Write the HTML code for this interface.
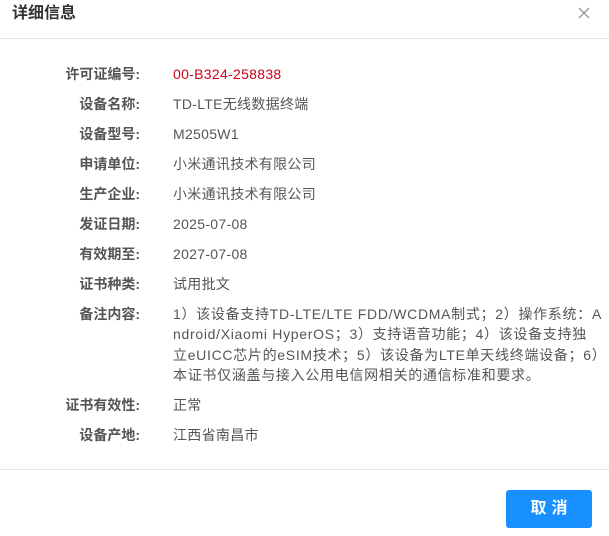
<!DOCTYPE html>
<html><head><meta charset="utf-8"><style>
html,body{margin:0;padding:0;background:#fff;width:609px;height:536px;overflow:hidden;font-family:"Liberation Sans","Noto Sans CJK SC",sans-serif;}
.title{position:absolute;left:12px;top:2px;font-size:16px;font-weight:bold;color:#333;line-height:24px;}
.x{position:absolute;left:578px;top:7px;width:12px;height:12px;}
.hr{position:absolute;left:0;width:609px;height:1px;background:#e8e8e8;}
.lab{position:absolute;right:469px;font-size:14px;font-weight:bold;color:#555;line-height:20px;white-space:nowrap;}
.val{position:absolute;left:173px;font-size:14px;color:#555;line-height:20.3px;white-space:nowrap;letter-spacing:0.3px;}
.btn{position:absolute;left:506px;top:490px;width:86px;height:38px;background:#1890ff;border-radius:3px;color:#fff;font-size:16px;font-weight:bold;text-align:center;line-height:38px;letter-spacing:5px;text-indent:5px;}
</style></head><body>
<div class="title">详细信息</div>
<svg class="x" viewBox="0 0 12 12"><path d="M1 1L11 11M11 1L1 11" stroke="#999" stroke-width="1.4"/></svg>
<div class="hr" style="top:38px"></div>
<div class="lab" style="top:64px">许可证编号:</div><div class="val" style="top:64px;color:#d0021b">00-B324-258838</div>
<div class="lab" style="top:94px">设备名称:</div><div class="val" style="top:94px">TD-LTE无线数据终端</div>
<div class="lab" style="top:124px">设备型号:</div><div class="val" style="top:124px">M2505W1</div>
<div class="lab" style="top:154px">申请单位:</div><div class="val" style="top:154px">小米通讯技术有限公司</div>
<div class="lab" style="top:184px">生产企业:</div><div class="val" style="top:184px">小米通讯技术有限公司</div>
<div class="lab" style="top:214px">发证日期:</div><div class="val" style="top:214px">2025-07-08</div>
<div class="lab" style="top:244px">有效期至:</div><div class="val" style="top:244px">2027-07-08</div>
<div class="lab" style="top:274px">证书种类:</div><div class="val" style="top:274px">试用批文</div>
<div class="lab" style="top:304px">备注内容:</div><div class="val" style="top:304px;letter-spacing:0.7px">1）该设备支持TD-LTE/LTE FDD/WCDMA制式；2）操作系统：A<br>ndroid/Xiaomi HyperOS；3）支持语音功能；4）该设备支持独<br>立eUICC芯片的eSIM技术；5）该设备为LTE单天线终端设备；6）<br>本证书仅涵盖与接入公用电信网相关的通信标准和要求。</div>
<div class="lab" style="top:395px">证书有效性:</div><div class="val" style="top:395px">正常</div>
<div class="lab" style="top:425px">设备产地:</div><div class="val" style="top:425px">江西省南昌市</div>
<div class="hr" style="top:469px"></div>
<div class="btn">取消</div>
</body></html>
